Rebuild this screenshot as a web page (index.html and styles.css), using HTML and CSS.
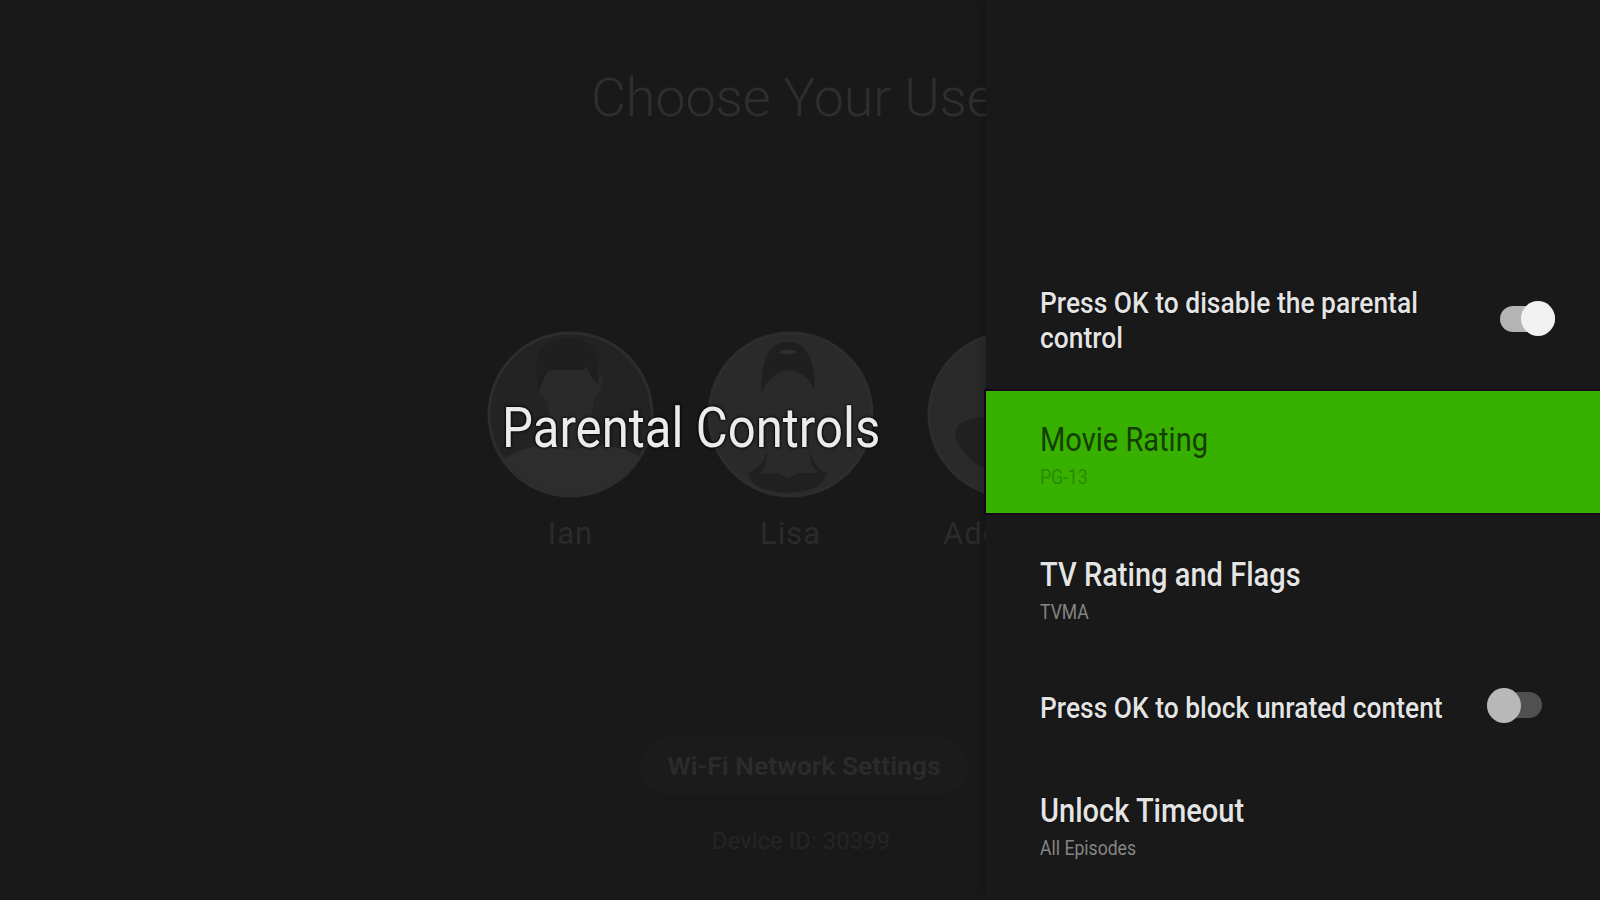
FILE: index.html
```html
<!DOCTYPE html>
<html lang="en">
<head>
  <meta charset="UTF-8" />
  <title>Parental Controls</title>
  <meta name="viewport" content="width=device-width, initial-scale=1.0" />
  <link rel="stylesheet" href="styles.css">
</head>
<body>
  <div class="screen">
    <main class="stage">
      <h1 class="heading">Choose Your Use</h1>

      <div class="users">
        <div class="user">
          <svg class="avatar" viewBox="0 0 167 167">
            <circle cx="83.5" cy="83.5" r="81.5" fill="#232323" stroke="#2d2d2d" stroke-width="3" />
            <path d="M59 36H108L116 47L113 60L107 70Q103 98 101 112L84 119L64 112Q64 98 60 70L51 60L50 48Z" fill="#2a2a2a" />
            <path d="M51 62L49 30Q53 8 82 7Q108 8 110 28L112 53L108 51L99 36L96 39H62L59 43Z" fill="#1f1f1f" />
            <path d="M17 128Q33 116 62 113L84 119L106 113Q140 116 154 127A82 82 0 0 1 17 128Z" fill="#2d2d2d" />
          </svg>
          <span class="name">Ian</span>
        </div>
        <div class="user">
          <svg class="avatar" viewBox="0 0 167 167">
            <circle cx="83.5" cy="83.5" r="81.5" fill="#2a2a2a" stroke="#2d2d2d" stroke-width="3" />
            <path d="M54 62Q54 31 63 19Q70 11 81 11Q95 11 101 23Q109 38 107 58Q98 40 82 39Q64 41 54 62Z" fill="#1f1f1f" />
            <ellipse cx="81" cy="21" rx="9" ry="2.5" fill="#2d2d2d" />
            <path d="M60 115Q59 135 41 142Q43 152 54 157Q80 166 107 157Q117 152 120 142Q107 138 101 115L104 133L112 142H92L80 147L70 142L53 143Q61 134 60 115Z" fill="#202020" />
          </svg>
          <span class="name">Lisa</span>
        </div>
        <div class="user">
          <svg class="avatar" viewBox="0 0 167 167">
            <circle cx="83.5" cy="83.5" r="81.5" fill="#2a2a2a" stroke="#2d2d2d" stroke-width="3" />
            <path d="M28 104Q29 86 60 86H107Q138 86 139 104Q133 125 111 137H56Q34 125 28 104Z" fill="#202020" />
          </svg>
          <span class="name name-cut">Ade</span>
        </div>
      </div>

      <div class="wifi">Wi-Fi Network Settings</div>
      <div class="device">Device ID: 30399</div>

      <h2 class="overlay-title">Parental Controls</h2>
    </main>

    <aside class="panel">
      <div class="row row-top">
        <div class="title title-small">Press OK to disable the parental<br>control</div>
        <span class="switch on"></span>
      </div>
      <div class="row selected">
        <div>
          <div class="title">Movie Rating</div>
          <div class="value">PG-13</div>
        </div>
      </div>
      <div class="row">
        <div>
          <div class="title">TV Rating and Flags</div>
          <div class="value">TVMA</div>
        </div>
      </div>
      <div class="row row-single">
        <div class="title title-small">Press OK to block unrated content</div>
        <span class="switch off"></span>
      </div>
      <div class="row">
        <div>
          <div class="title">Unlock Timeout</div>
          <div class="value">All Episodes</div>
        </div>
      </div>
    </aside>
  </div>
</body>
</html>
```
FILE: styles.css
```css
* {
  box-sizing: border-box;
}

body {
  margin: 0;
  background: #191919;
  font-family: Roboto, sans-serif;
}

.screen {
  display: grid;
  grid-template-columns: 986px 614px;
  width: 1600px;
  height: 900px;
  overflow: hidden;
}

/* Dimmed user picker */
.stage {
  position: relative;
  overflow: hidden;
  white-space: nowrap;
  color: #2b2b2b;
}

.heading {
  margin: 65px 0 0 591px;
  font-size: 54px;
  font-weight: 300;
  line-height: 66px;
  letter-spacing: -0.2px;
  color: #2e2e2e;
}

.users {
  display: flex;
  gap: 53px;
  margin: 200px 0 0 487px;
}

.user {
  flex: none;
  width: 167px;
  text-align: center;
}

.avatar {
  display: block;
  width: 167px;
  height: 167px;
}

.name {
  display: block;
  margin-top: 16px;
  font-size: 31px;
  line-height: 40px;
  letter-spacing: 1px;
}

/* Runs under the settings panel */
.name-cut {
  padding-left: 16px;
  text-align: left;
}

.wifi {
  width: 328px;
  height: 58px;
  margin: 183px 0 0 640px;
  border-radius: 29px;
  background: #1b1b1b;
  font-size: 26.5px;
  font-weight: 600;
  line-height: 58px;
  text-align: center;
}

.device {
  width: 328px;
  margin: 31px 0 0 637px;
  font-size: 24px;
  line-height: 30px;
  text-align: center;
  color: #252525;
}

/* Sits over the avatars */
.overlay-title {
  position: absolute;
  top: 395px;
  left: 502px;
  margin: 0;
  font-size: 56px;
  font-weight: 400;
  line-height: 66px;
  color: #ebebeb;
  text-shadow: 0 0 3px #000, 0 0 3px #000;
  transform: scaleX(0.877);
  transform-origin: left;
}

/* Settings panel */
.panel {
  position: relative;
  padding-top: 249px;
  background: #191919;
  box-shadow: 0 0 10px rgba(0, 0, 0, 0.3);
}

.row {
  display: flex;
  align-items: center;
  justify-content: space-between;
  height: 122px;
  margin-bottom: 9px;
  padding: 10px 0 0 54px;
}

.row-top {
  height: 142px;
  margin-bottom: 0;
  padding-top: 0;
}

.row-single {
  height: 100px;
  margin-bottom: 5px;
  padding-top: 0;
}

.title,
.value {
  white-space: nowrap;
  transform: scaleX(0.88);
  transform-origin: left;
}

.title {
  font-size: 33px;
  font-weight: 500;
  line-height: 40px;
  color: #e4e4e4;
  text-shadow: 0 0 2px #000;
}

.title-small {
  width: 440px;
  font-size: 30px;
  line-height: 35px;
}

.value {
  font-size: 20px;
  line-height: 34px;
  color: #858585;
}

.selected {
  margin-bottom: 13px;
  background: #38b000;
  box-shadow: 0 0 0 2px #14051a;
}

.selected .title {
  font-weight: 400;
  color: #153e05;
  text-shadow: none;
}

.selected .value {
  color: #2b8a04;
}

.switch {
  display: flex;
  align-items: center;
  flex: none;
  width: 55px;
  height: 26px;
  border-radius: 13px;
}

.switch::before {
  content: "";
  width: 34px;
  height: 35px;
  border-radius: 50%;
}

.on {
  justify-content: flex-end;
  margin: 0 45px 3px 0;
  background: #b4b4b4;
}

.on::before {
  background: #f1f1f1;
}

.off {
  margin: 0 58px 4px 0;
  background: #505050;
}

.off::before {
  background: #b8b8b8;
}
```
